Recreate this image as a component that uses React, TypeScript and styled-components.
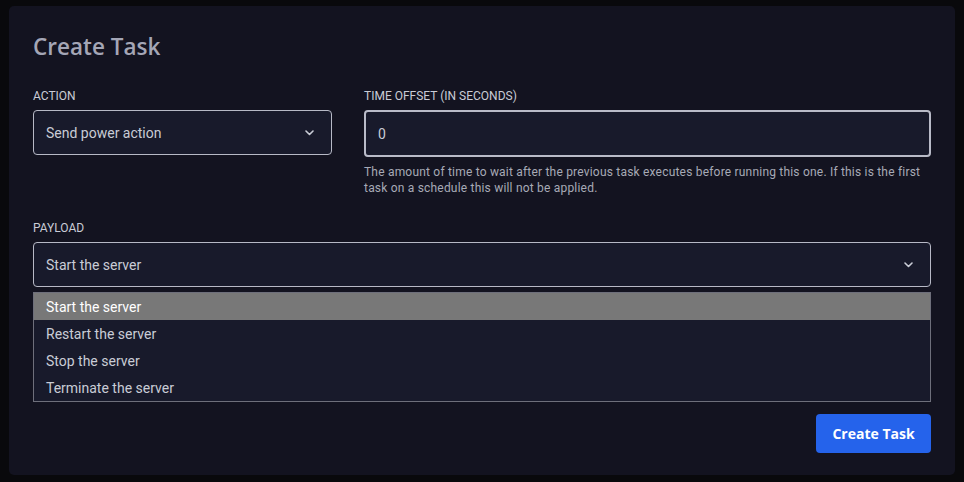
import React from "react";
import styled, { createGlobalStyle } from "styled-components";

const Global = createGlobalStyle`
  html, body { margin: 0; padding: 0; background: #09090c; }
  body { padding: 6px 9px 7px 9px; font-family: Roboto, "Noto Sans", sans-serif; }
  * { box-sizing: border-box; }
`;

const Panel = styled.div`
  width: 946px;
  height: 469px;
  background: #131320;
  border-radius: 5px;
  padding: 27px 24px 22px 24px;
  display: flex;
  flex-direction: column;
`;

const Title = styled.h2`
  margin: 0;
  font-family: "Open Sans", sans-serif;
  font-weight: 600;
  font-size: 22.5px;
  line-height: 28px;
  color: #a4a6b6;
`;

const Row = styled.div`
  display: flex;
  gap: 32px;
  margin-top: 27px;
`;

const Field = styled.div<{ $width?: number }>`
  display: flex;
  flex-direction: column;
  ${(p) => (p.$width ? `width: ${p.$width}px;` : "flex: 1;")}
`;

const Label = styled.label`
  font-size: 12px;
  line-height: 16px;
  text-transform: uppercase;
  color: #c9ccd6;
  margin-bottom: 6px;
`;

const SelectBox = styled.div`
  height: 45px;
  border: 1px solid #b7b9c6;
  border-radius: 4px;
  background: #181a2b;
  display: flex;
  align-items: center;
  justify-content: space-between;
  padding: 0 17px 0 12px;
  font-size: 14px;
  color: #c9ccd6;
`;

const Input = styled.div`
  height: 47px;
  border: 2px solid #b9bbc8;
  border-radius: 4px;
  background: #181a2b;
  display: flex;
  align-items: center;
  padding: 0 12px;
  font-size: 14px;
  color: #c9ccd6;
`;

const Help = styled.p`
  margin: 7px 0 0 0;
  font-size: 12px;
  line-height: 16px;
  letter-spacing: 0.2px;
  color: #a7aab6;
`;

const PayloadField = styled.div`
  display: flex;
  flex-direction: column;
  margin-top: 24px;
`;

const List = styled.div`
  margin-top: 5px;
  border: 1px solid #6e6f7b;
  background: #181a2b;
  display: flex;
  flex-direction: column;
`;

const Option = styled.div<{ $active?: boolean }>`
  height: 27px;
  display: flex;
  align-items: center;
  padding: 0 12px;
  font-size: 14px;
  color: ${(p) => (p.$active ? "#ffffff" : "#c9ccd6")};
  background: ${(p) => (p.$active ? "#787878" : "transparent")};
`;

const Footer = styled.div`
  display: flex;
  justify-content: flex-end;
  margin-top: 12px;
`;

const Button = styled.button`
  width: 115px;
  height: 39px;
  border: none;
  border-radius: 4px;
  background: #2563eb;
  color: #ffffff;
  font-family: "Open Sans", sans-serif;
  font-weight: 700;
  font-size: 14px;
`;

const Chevron = () => (
  <svg width="9" height="6" viewBox="0 0 9 6" fill="none">
    <path d="M1 1l3.5 3.5L8 1" stroke="#c9ccd6" strokeWidth="1.6" strokeLinecap="round" strokeLinejoin="round" />
  </svg>
);

export default function App() {
  const options = ["Start the server", "Restart the server", "Stop the server", "Terminate the server"];
  return (
    <>
      <Global />
      <Panel>
        <Title>Create Task</Title>
        <Row>
          <Field $width={299}>
            <Label>Action</Label>
            <SelectBox>
              <span>Send power action</span>
              <Chevron />
            </SelectBox>
          </Field>
          <Field>
            <Label>Time offset (in seconds)</Label>
            <Input>0</Input>
            <Help>
              The amount of time to wait after the previous task executes before running this one. If this is the
              first task on a schedule this will not be applied.
            </Help>
          </Field>
        </Row>
        <PayloadField>
          <Label>Payload</Label>
          <SelectBox>
            <span>Start the server</span>
            <Chevron />
          </SelectBox>
          <List>
            {options.map((o, i) => (
              <Option key={o} $active={i === 0}>
                {o}
              </Option>
            ))}
          </List>
        </PayloadField>
        <Footer>
          <Button>Create Task</Button>
        </Footer>
      </Panel>
    </>
  );
}
